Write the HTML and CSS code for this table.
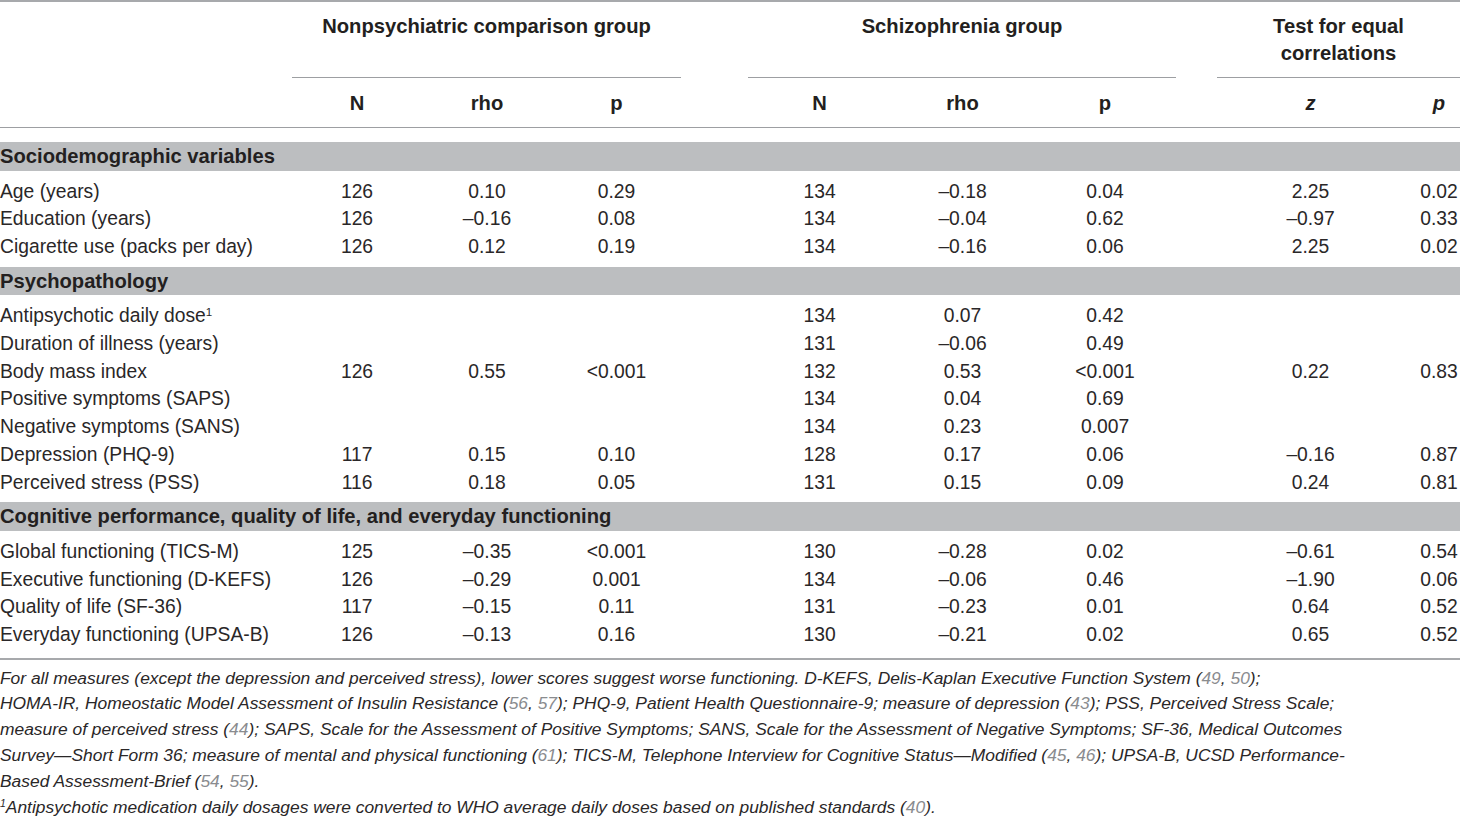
FILE: index.html
```html
<!DOCTYPE html>
<html lang="en">
<head>
<meta charset="utf-8">
<title>Correlations table</title>
<link rel="stylesheet" href="styles.css">
</head>
<body>
<div class="page">
  <table class="corr">
    <colgroup>
      <col class="c-label">
      <col class="c-n1"><col class="c-n1"><col class="c-n1b">
      <col class="c-gap1">
      <col class="c-s"><col class="c-s"><col class="c-sb">
      <col class="c-gap2">
      <col class="c-z"><col class="c-p">
    </colgroup>
    <thead>
      <tr class="groups">
        <th class="label-head" rowspan="2"></th>
        <th class="group" colspan="3">Nonpsychiatric comparison group</th>
        <th class="gap"></th>
        <th class="group" colspan="3">Schizophrenia group</th>
        <th class="gap"></th>
        <th class="group" colspan="2">Test for equal<br>correlations</th>
      </tr>
      <tr class="subs">
        <th>N</th><th>rho</th><th>p</th>
        <th class="gap"></th>
        <th>N</th><th>rho</th><th>p</th>
        <th class="gap"></th>
        <th class="ital z">z</th><th class="ital">p</th>
      </tr>
    </thead>
    <tbody>
      <tr class="spacer"><td colspan="11"></td></tr>
      <tr class="band"><th colspan="11">Sociodemographic variables</th></tr>
      <tr><td class="lbl">Age (years)</td><td>126</td><td>0.10</td><td>0.29</td><td></td><td>134</td><td>–0.18</td><td>0.04</td><td></td><td class="z">2.25</td><td>0.02</td></tr>
      <tr><td class="lbl">Education (years)</td><td>126</td><td>–0.16</td><td>0.08</td><td></td><td>134</td><td>–0.04</td><td>0.62</td><td></td><td class="z">–0.97</td><td>0.33</td></tr>
      <tr><td class="lbl">Cigarette use (packs per day)</td><td>126</td><td>0.12</td><td>0.19</td><td></td><td>134</td><td>–0.16</td><td>0.06</td><td></td><td class="z">2.25</td><td>0.02</td></tr>
    </tbody>
    <tbody>
      <tr class="band"><th colspan="11">Psychopathology</th></tr>
      <tr><td class="lbl">Antipsychotic daily dose<sup>1</sup></td><td></td><td></td><td></td><td></td><td>134</td><td>0.07</td><td>0.42</td><td></td><td class="z"></td><td></td></tr>
      <tr><td class="lbl">Duration of illness (years)</td><td></td><td></td><td></td><td></td><td>131</td><td>–0.06</td><td>0.49</td><td></td><td class="z"></td><td></td></tr>
      <tr><td class="lbl">Body mass index</td><td>126</td><td>0.55</td><td>&lt;0.001</td><td></td><td>132</td><td>0.53</td><td>&lt;0.001</td><td></td><td class="z">0.22</td><td>0.83</td></tr>
      <tr><td class="lbl">Positive symptoms (SAPS)</td><td></td><td></td><td></td><td></td><td>134</td><td>0.04</td><td>0.69</td><td></td><td class="z"></td><td></td></tr>
      <tr><td class="lbl">Negative symptoms (SANS)</td><td></td><td></td><td></td><td></td><td>134</td><td>0.23</td><td>0.007</td><td></td><td class="z"></td><td></td></tr>
      <tr><td class="lbl">Depression (PHQ-9)</td><td>117</td><td>0.15</td><td>0.10</td><td></td><td>128</td><td>0.17</td><td>0.06</td><td></td><td class="z">–0.16</td><td>0.87</td></tr>
      <tr><td class="lbl">Perceived stress (PSS)</td><td>116</td><td>0.18</td><td>0.05</td><td></td><td>131</td><td>0.15</td><td>0.09</td><td></td><td class="z">0.24</td><td>0.81</td></tr>
    </tbody>
    <tbody>
      <tr class="band"><th colspan="11">Cognitive performance, quality of life, and everyday functioning</th></tr>
      <tr><td class="lbl">Global functioning (TICS-M)</td><td>125</td><td>–0.35</td><td>&lt;0.001</td><td></td><td>130</td><td>–0.28</td><td>0.02</td><td></td><td class="z">–0.61</td><td>0.54</td></tr>
      <tr><td class="lbl">Executive functioning (D-KEFS)</td><td>126</td><td>–0.29</td><td>0.001</td><td></td><td>134</td><td>–0.06</td><td>0.46</td><td></td><td class="z">–1.90</td><td>0.06</td></tr>
      <tr><td class="lbl">Quality of life (SF-36)</td><td>117</td><td>–0.15</td><td>0.11</td><td></td><td>131</td><td>–0.23</td><td>0.01</td><td></td><td class="z">0.64</td><td>0.52</td></tr>
      <tr><td class="lbl">Everyday functioning (UPSA-B)</td><td>126</td><td>–0.13</td><td>0.16</td><td></td><td>130</td><td>–0.21</td><td>0.02</td><td></td><td class="z">0.65</td><td>0.52</td></tr>
    </tbody>
  </table>
  <div class="notes">
    <p>For all measures (except the depression and perceived stress), lower scores suggest worse functioning. D-KEFS, Delis-Kaplan Executive Function System (<span class="ref">49</span>, <span class="ref">50</span>);<br>HOMA-IR, Homeostatic Model Assessment of Insulin Resistance (<span class="ref">56</span>, <span class="ref">57</span>); PHQ-9, Patient Health Questionnaire-9; measure of depression (<span class="ref">43</span>); PSS, Perceived Stress Scale;<br>measure of perceived stress (<span class="ref">44</span>); SAPS, Scale for the Assessment of Positive Symptoms; SANS, Scale for the Assessment of Negative Symptoms; SF-36, Medical Outcomes<br>Survey—Short Form 36; measure of mental and physical functioning (<span class="ref">61</span>); TICS-M, Telephone Interview for Cognitive Status—Modified (<span class="ref">45</span>, <span class="ref">46</span>); UPSA-B, UCSD Performance-<br>Based Assessment-Brief (<span class="ref">54</span>, <span class="ref">55</span>).</p>
    <p><sup>1</sup>Antipsychotic medication daily dosages were converted to WHO average daily doses based on published standards (<span class="ref">40</span>).</p>
  </div>
</div>
</body>
</html>
```

FILE: styles.css
```css
html, body {
  margin: 0;
  padding: 0;
  background: #ffffff;
}
body {
  font-family: "Liberation Sans", Arial, sans-serif;
  color: #2a2728;
}
.page {
  width: 1460px;
}
.corr {
  width: 1460px;
  table-layout: fixed;
  border-collapse: collapse;
  border-top: 2px solid #a7a9ac;
  border-bottom: 2px solid #a7a9ac;
  font-size: 19.3px;
}
.c-label { width: 292px; }
.c-n1 { width: 130px; }
.c-n1b { width: 129px; }
.c-gap1 { width: 67px; }
.c-s { width: 143px; }
.c-sb { width: 142px; }
.c-gap2 { width: 41px; }
.c-z { width: 201px; }
.c-p { width: 42px; }

.corr th, .corr td {
  padding: 0;
  text-align: center;
}
.corr th {
  font-size: 20.2px;
  color: #231f20;
}
.groups th {
  vertical-align: top;
  font-weight: bold;
  line-height: 27px;
  padding-top: 11px;
  padding-bottom: 10px;
}
.groups th.group {
  border-bottom: 1px solid #9d9fa2;
}
.groups th.label-head {
  border-bottom: 1px solid #9d9fa2;
}
.subs th {
  font-weight: bold;
  line-height: 27px;
  padding-top: 12px;
  padding-bottom: 10px;
  border-bottom: 1px solid #9d9fa2;
}
.subs th.ital {
  font-style: italic;
}
.corr .z {
  padding-right: 14px;
}
.spacer td {
  height: 14px;
}
.band th {
  background: #bcbec0;
  text-align: left;
  font-weight: bold;
  line-height: 28.6px;
  height: 28.6px;
}
.corr td {
  line-height: 27.7px;
}
.corr td.lbl {
  text-align: left;
  white-space: nowrap;
}
.band + tr td {
  padding-top: 7px;
}
tbody tr:last-child td {
  padding-bottom: 6px;
}
tbody:last-child tr:last-child td {
  padding-bottom: 9px;
}
sup {
  font-size: 0.6em;
  line-height: 0;
  vertical-align: 0.55em;
}
.notes {
  padding-top: 6px;
  font-style: italic;
  font-size: 17.4px;
  line-height: 25.8px;
}
.notes p {
  margin: 0;
  white-space: nowrap;
}
.ref {
  color: #8a8c8f;
}
```
